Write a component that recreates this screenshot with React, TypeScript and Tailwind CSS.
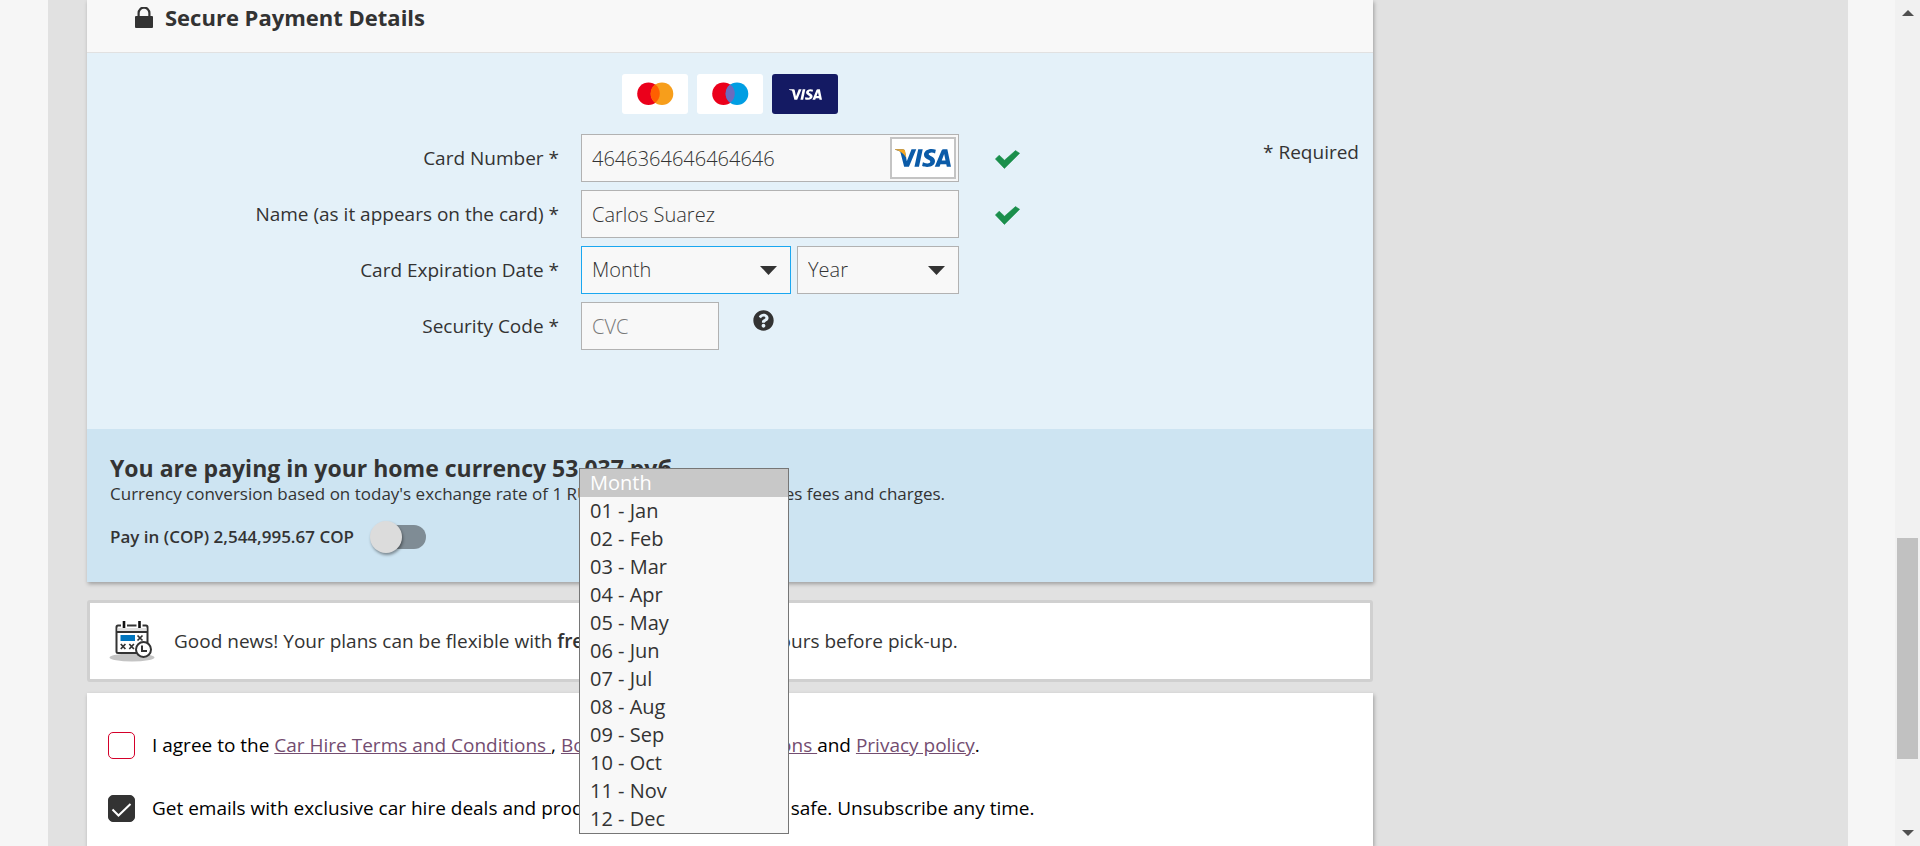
import { useState } from "react";
import type { ReactNode } from "react";
import { FaQuestionCircle } from "react-icons/fa";
import { SiVisa } from "react-icons/si";

const MONTHS = ["01 - Jan", "02 - Feb", "03 - Mar", "04 - Apr", "05 - May", "06 - Jun", "07 - Jul", "08 - Aug", "09 - Sep", "10 - Oct", "11 - Nov", "12 - Dec"];

const FIELD = "h-12 w-full appearance-none rounded-none border bg-[#f8f8f8] px-2.5 text-[20px] font-light text-[#333] outline-none placeholder:text-[#777]";

function LockIcon() {
  return (
    <svg viewBox="0 0 18 21" className="h-[21px] w-[18px] shrink-0" fill="#333" aria-hidden="true">
      <rect x="0" y="9" width="18" height="12" rx="1" />
      <path d="M3.6 10V6a5.2 5.2 0 0 1 10.800 0v4" fill="none" stroke="#333" strokeWidth="2.2" />
    </svg>
  );
}

function TickIcon() {
  return (
    <svg viewBox="0 0 25 19" className="h-[19px] w-[25px]" aria-label="Valid">
      <path d="M.4 9 4.200 5.200 9.500 10.200 20.500.6 24.600 3.300 9.400 18.400Z" fill="#1a8f4c" stroke="#1a8f4c" strokeWidth=".6" strokeLinejoin="round" />
    </svg>
  );
}

function CardCircles({ right, overlap, label }: { right: string; overlap: string; label: string }) {
  return (
    <svg viewBox="0 0 66 40" className="h-10 w-[66px] rounded-[3px] bg-white" role="img" aria-label={label}>
      <circle cx="26.5" cy="19.7" r="11.3" fill="#eb001b" />
      <circle cx="40" cy="19.7" r="11.3" fill={right} />
      <path d="M33.2 10.6a11.3 11.3 0 0 1 0 18.2a11.3 11.3 0 0 1 0-18.2Z" fill={overlap} />
    </svg>
  );
}

function VisaBadge() {
  return (
    <svg viewBox="0 0 66 42" className="pointer-events-none absolute top-[3px] right-[3px] h-[42px] w-[66px]" role="img" aria-label="Visa">
      <rect x="1" y="1" width="64" height="40" fill="#fff" stroke="#c4c4c4" strokeWidth="2" />
      <SiVisa x="5" y="-7" size={56} color="#0b5ba8" />
      <path d="M5 12.2h7.6c1.4 0 2.2.6 2.5 1.900l1.300 7C14.500 17 10 13.600 5 12.700Z" fill="#f6a723" />
    </svg>
  );
}

function CalendarIcon() {
  return (
    <svg viewBox="0 0 46 42" className="h-[42px] w-[46px] shrink-0" aria-hidden="true">
      <ellipse cx="23" cy="37.500" rx="22.500" ry="4" fill="#c4c4c4" />
      <rect x="7.500" y="5.500" width="31" height="27.500" rx="1.500" fill="#fff" stroke="#333" strokeWidth="2" />
      <path d="M8.500 8h29v3.500h-29Z" fill="#e0e0e0" />
      <path d="M7.500 12h31" stroke="#333" strokeWidth="2" />
      <path d="M12 4h6v4h-6ZM27.500 4h6v4h-6Z" fill="#fff" />
      <path d="M15 1v7M30.500 1v7" stroke="#111" strokeWidth="2.600" />
      <path d="M11.500 15H26v6H11.500Z" fill="#0075be" />
      <path d="m28.500 15.500 5 5m0-5-5 5M11.800 24l4.600 5m0-5-4.600 5M20.300 24l4.600 5m0-5-4.600 5" stroke="#333" strokeWidth="1.700" />
      <circle cx="34.500" cy="29.500" r="7.500" fill="#fff" stroke="#333" strokeWidth="2" />
      <path d="M33 25.500v5.500h5" fill="none" stroke="#333" strokeWidth="2" />
    </svg>
  );
}

function Row({ id, label, children }: { id: string; label: string; children: ReactNode }) {
  return (
    <div className="grid grid-cols-[minmax(0,472px)_378px_1fr] items-center">
      <label htmlFor={id} className="text-right text-[19px] text-[#333]">
        {label} *
      </label>
      {children}
    </div>
  );
}

function SelectBox({ id, text, options, className, border, children }: { id: string; text: string; options: string[]; className: string; border: string; children?: ReactNode }) {
  return (
    <div className={`relative ${className}`}>
      <select id={id} aria-label={text} className={`${FIELD} ${border}`}>
        <option>{text}</option>
        {options.map((o) => (
          <option key={o}>{o}</option>
        ))}
      </select>
      <svg viewBox="0 0 17 9" className="pointer-events-none absolute top-5 right-3.5 h-[9px] w-[17px]" aria-hidden="true">
        <path d="M0 0h17L8.500 9Z" fill="#333" />
      </svg>
      {children}
    </div>
  );
}

function MonthMenu() {
  return (
    <ul role="listbox" aria-label="Month options" className="absolute top-[222px] -left-0.5 z-10 w-full border border-[#767676] bg-[#f8f8f8] text-[20px] leading-7 text-[#333]">
      <li role="option" aria-selected="true" className="bg-[#c8c8c8] px-2.5 text-white">Month</li>
      {MONTHS.map((m) => (
        <li key={m} role="option" aria-selected="false" className="px-2.5">{m}</li>
      ))}
    </ul>
  );
}

function CheckRow({ checked, children }: { checked: boolean; children: ReactNode }) {
  const [on, setOn] = useState(checked);
  return (
    <label className="flex items-center gap-[17px]">
      <span className="relative flex size-[27px] shrink-0">
        <input type="checkbox" checked={on} onChange={() => setOn(!on)} className="size-[27px] appearance-none rounded-[5px] border border-[#d4002a] bg-white checked:border-[#333] checked:bg-[#333]" />
        {on && (
          <svg viewBox="0 0 27 27" className="pointer-events-none absolute inset-0" aria-hidden="true">
            <path d="m4.500 14.500 6 6L22.500 9" fill="none" stroke="#fff" strokeWidth="2" />
          </svg>
        )}
      </span>
      <span className="whitespace-nowrap">{children}</span>
    </label>
  );
}

function Scrollbar() {
  return (
    <div className="flex w-[25px] shrink-0 flex-col items-center justify-between bg-[#f1f1f1] py-2.5" aria-hidden="true">
      <svg viewBox="0 0 12 6" className="h-1.5 w-3"><path d="M0 6 6 0l6 6Z" fill="#505050" /></svg>
      <div className="flex w-full flex-1 flex-col items-center">
        <div className="flex-[522]" />
        <div className="w-[21px] flex-[221] bg-[#c1c1c1]" />
        <div className="flex-[71]" />
      </div>
      <svg viewBox="0 0 12 6" className="h-1.5 w-3"><path d="M0 0h12L6 6Z" fill="#505050" /></svg>
    </div>
  );
}

export default function App() {
  const [local, setLocal] = useState(false);
  const link = "text-[#734d70] underline";
  return (
    <div className="flex h-screen overflow-hidden bg-[#f6f6f6] font-['Open_Sans','Noto_Sans',sans-serif] text-[#333]">
      <div className="min-w-0 flex-1 pr-[47px] pl-12">
        <main className="flex h-full flex-col bg-[#e1e1e1] pl-[39px]">
          <section className="w-full max-w-[1286px] shadow-[1px_2px_4px_rgba(0,0,0,0.3)]">
            <header className="flex h-[53px] items-start gap-3 border-b border-[#e1e1e1] bg-[#f8f8f8] pt-[3px] pl-12">
              <div className="pt-1"><LockIcon /></div>
              <h2 className="text-[22px] leading-7 font-bold">Secure Payment Details</h2>
            </header>

            <form className="relative h-[376px] bg-[#e4f1f9] pt-[21px]">
              <div className="flex gap-[9px] pl-[535px]">
                <CardCircles right="#f79e1b" overlap="#ff5f00" label="Mastercard" />
                <CardCircles right="#009ee3" overlap="#6c6bbd" label="Maestro" />
                <span className="flex h-10 w-[66px] items-center justify-center rounded-[3px] bg-[#141a63]">
                  <SiVisa size={33} color="#fff" title="Visa" />
                </span>
              </div>
              <p className="absolute top-[85px] right-3.5 text-[19px] leading-7">* Required</p>

              <div className="mt-5 flex flex-col gap-2">
                <Row id="card" label="Card Number">
                  <div className="relative ml-[22px] w-[378px]">
                    <input id="card" defaultValue="4646364646464646" className={`${FIELD} border-[#b2b2b2]`} />
                    <VisaBadge />
                  </div>
                  <div className="pt-0.5 pl-[58px]"><TickIcon /></div>
                </Row>
                <Row id="name" label="Name (as it appears on the card)">
                  <div className="ml-[22px] w-[378px]">
                    <input id="name" defaultValue="Carlos Suarez" className={`${FIELD} border-[#b2b2b2]`} />
                  </div>
                  <div className="pt-0.5 pl-[58px]"><TickIcon /></div>
                </Row>
                <Row id="month" label="Card Expiration Date">
                  <div className="ml-[22px] flex w-[378px] gap-1.5">
                    <SelectBox id="month" text="Month" options={MONTHS} className="w-[210px]" border="border-[#1aa7f0]">
                      <MonthMenu />
                    </SelectBox>
                    <SelectBox id="year" text="Year" options={["2023", "2024", "2025"]} className="flex-1" border="border-[#b2b2b2]" />
                  </div>
                </Row>
                <Row id="cvc" label="Security Code">
                  <div className="ml-[22px] flex w-[378px] gap-[34px]">
                    <div className="w-[138px]">
                      <input id="cvc" placeholder="CVC" className={`${FIELD} border-[#b2b2b2]`} />
                    </div>
                    <button type="button" aria-label="What is the security code?" className="mt-2 size-[21px]">
                      <FaQuestionCircle size={21} />
                    </button>
                  </div>
                </Row>
              </div>
            </form>

            <div className="h-[153px] bg-[#cde4f2] pt-[23px] pl-[23px]">
              <h3 className="text-[23px] leading-8 font-bold">You are paying in your home currency 53 037 руб</h3>
              <p className="text-[17px] leading-5">Currency conversion based on today's exchange rate of 1 RUB = 47.9 COP. This includes fees and charges.</p>
              <div className="mt-[17px] flex items-center gap-5">
                <label htmlFor="local" className="text-[17px] leading-8 font-semibold">Pay in (COP) 2,544,995.67 COP</label>
                <input
                  id="local"
                  type="checkbox"
                  role="switch"
                  checked={local}
                  onChange={() => setLocal(!local)}
                  className="relative h-6 w-[52px] appearance-none rounded-full bg-[#7f8c95] before:absolute before:-top-1 before:-left-1 before:size-8 before:rounded-full before:bg-[#dcdcdc] before:shadow-[1px_2px_3px_rgba(0,0,0,0.4)] checked:before:left-6"
                />
              </div>
            </div>
          </section>

          <section className="mt-[18px] flex h-[82px] w-full max-w-[1286px] items-center gap-[19px] rounded-[3px] border-3 border-[#d0d0d0] bg-white pl-[19px]">
            <CalendarIcon />
            <p className="text-[19px] whitespace-nowrap">
              Good news! Your plans can be flexible with <b className="font-semibold">free cancellation</b> till 48 hours before pick-up.
            </p>
          </section>

          <section className="mt-[11px] flex w-full max-w-[1286px] flex-1 flex-col gap-[35px] bg-white pt-[38px] pl-[21px] text-[19px] leading-7 text-black shadow-[1px_2px_4px_rgba(0,0,0,0.3)]">
            <CheckRow checked={false}>
              I agree to the <a href="#terms" className={link}>Car Hire Terms and Conditions </a>, <a href="#booking" className={link}>Booking Terms &amp; Conditions </a>and <a href="#privacy" className={link}>Privacy policy</a>.
            </CheckRow>
            <CheckRow checked>
              Get emails with exclusive car hire deals and product news. We keep you safe. Unsubscribe any time.
            </CheckRow>
          </section>
        </main>
      </div>
      <Scrollbar />
    </div>
  );
}
